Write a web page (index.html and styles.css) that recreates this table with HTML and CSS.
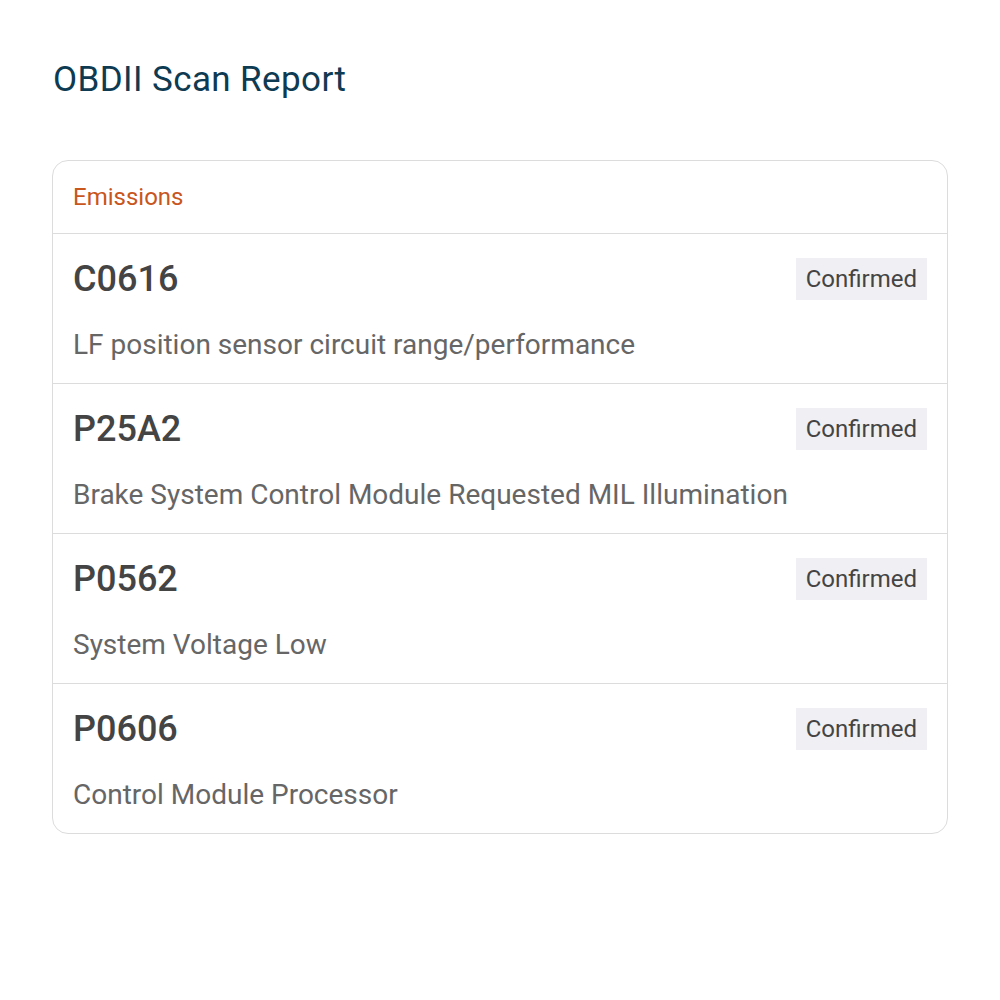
FILE: index.html
```html
<!DOCTYPE html>
<html lang="en">
  <head>
    <meta charset="UTF-8" />
    <meta name="viewport" content="width=device-width, initial-scale=1.0" />
    <title>OBDII Scan Report</title>
    <link rel="stylesheet" href="styles.css">
  </head>
  <body>
    <div class="container">
      <h1 class="title">OBDII Scan Report</h1>
      <div class="card">
        <div class="card-header">Emissions</div>
        <div class="code-row">
          <div class="code-top">
            <span class="code">C0616</span>
            <span class="status">Confirmed</span>
          </div>
          <p class="desc">LF position sensor circuit range/performance</p>
        </div>
        <div class="code-row">
          <div class="code-top">
            <span class="code">P25A2</span>
            <span class="status">Confirmed</span>
          </div>
          <p class="desc">Brake System Control Module Requested MIL Illumination</p>
        </div>
        <div class="code-row">
          <div class="code-top">
            <span class="code">P0562</span>
            <span class="status">Confirmed</span>
          </div>
          <p class="desc">System Voltage Low</p>
        </div>
        <div class="code-row">
          <div class="code-top">
            <span class="code">P0606</span>
            <span class="status">Confirmed</span>
          </div>
          <p class="desc">Control Module Processor</p>
        </div>
      </div>
    </div>
  </body>
</html>
```

FILE: styles.css
```css
body {
  margin: 0;
  font-family: Roboto, "Liberation Sans", sans-serif;
  background: #fff;
}
.container {
  padding: 59px 52px;
}
.title {
  margin: 0 0 60px 1px;
  font-size: 35px;
  line-height: 41px;
  letter-spacing: 0.4px;
  font-weight: 400;
  color: #0e3a52;
}
.card {
  border: 1px solid #dcdcdc;
  border-radius: 16px;
}
.card-header {
  padding: 21px 20px 21px;
  font-size: 24px;
  line-height: 30px;
  color: #c8561d;
  border-bottom: 1px solid #dcdcdc;
}
.code-row {
  padding: 24px 20px 21px;
  border-bottom: 1px solid #dcdcdc;
}
.code-row:last-child {
  border-bottom: none;
}
.code-top {
  display: flex;
  justify-content: space-between;
  align-items: flex-start;
  height: 42px;
}
.code {
  font-size: 36px;
  line-height: 43px;
  font-weight: 500;
  color: #444;
}
.status {
  background: #f0f0f4;
  color: #444;
  font-size: 24px;
  line-height: 42px;
  padding: 0 10px;
}
.desc {
  margin: 28px 0 0;
  font-size: 28px;
  line-height: 34px;
  color: #666;
}
```
